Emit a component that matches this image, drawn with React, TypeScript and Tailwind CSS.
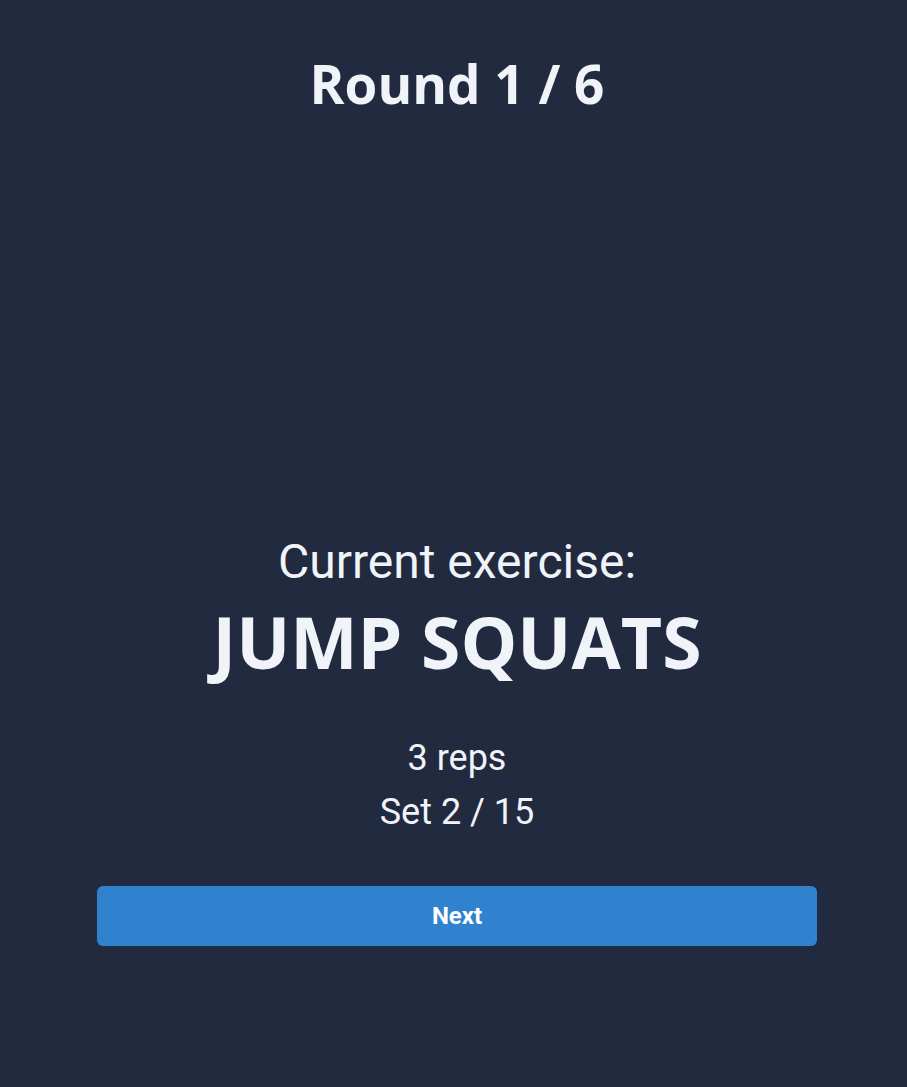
export default function App() {
  return (
    <div className="min-h-[1087px] bg-[#222a40] text-[#f0f4f8] flex flex-col items-center pl-[7px]">
      <h1 className="mt-[57px] text-[53px] leading-none font-bold font-['Open_Sans',sans-serif]">
        Round 1 / 6
      </h1>

      <div className="mt-[428px] flex flex-col items-center w-full">
        <p className="text-[48px] leading-none font-['Roboto',sans-serif]">Current exercise:</p>
        <h2 className="mt-[20px] text-[71.5px] leading-none font-bold font-['Open_Sans',sans-serif]">
          JUMP SQUATS
        </h2>
        <p className="mt-[62px] text-[36px] leading-none font-['Roboto',sans-serif]">3 reps</p>
        <p className="mt-[18px] text-[36px] leading-none font-['Roboto',sans-serif]">Set 2 / 15</p>
        <button className="mt-[56px] w-[720px] h-[60px] rounded-md bg-[#3182ce] text-white text-[24px] font-bold font-['Roboto',sans-serif]">
          Next
        </button>
      </div>
    </div>
  )
}
